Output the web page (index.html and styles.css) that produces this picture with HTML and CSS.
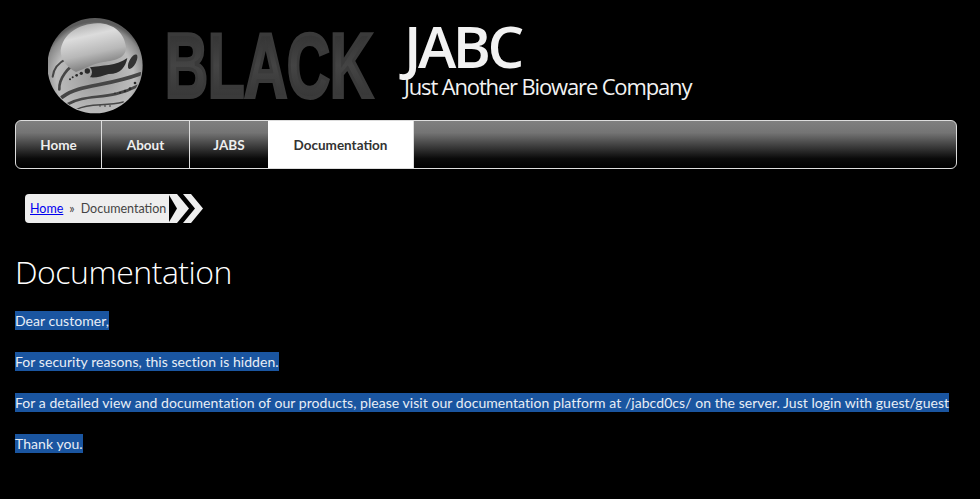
FILE: index.html
```html
<!DOCTYPE html>
<html lang="en">
<head>
    <meta charset="UTF-8">
    <title>JABC - Documentation</title>
    <link rel="stylesheet" href="styles.css">
</head>
<body>
    <header class="site-header">
        <svg class="logo" width="340" height="100" viewBox="0 0 340 100" aria-hidden="true">
            <defs>
                <radialGradient id="ball" cx="50%" cy="62%" r="58%">
                    <stop offset="0" stop-color="#9a9a9a"/>
                    <stop offset="0.7" stop-color="#bcbcbc"/>
                    <stop offset="0.92" stop-color="#8a8a8a"/>
                    <stop offset="1" stop-color="#5c5c5c"/>
                </radialGradient>
                <linearGradient id="shine" x1="0" y1="0" x2="0.3" y2="1">
                    <stop offset="0" stop-color="#a0a0a0"/>
                    <stop offset="0.35" stop-color="#dcdcdc"/>
                    <stop offset="0.7" stop-color="#b8b8b8"/>
                    <stop offset="1" stop-color="#7c7c7c"/>
                </linearGradient>
                <linearGradient id="word" x1="0" y1="0" x2="0" y2="1">
                    <stop offset="0" stop-color="#2c2c2c"/>
                    <stop offset="0.5" stop-color="#444"/>
                    <stop offset="1" stop-color="#303030"/>
                </linearGradient>
                <clipPath id="ball-clip"><circle cx="165" cy="167" r="140"/></clipPath>
            </defs>
            <g transform="translate(-8 -8) scale(0.3333)">
                <circle cx="165" cy="167" r="143" fill="url(#ball)"/>
                <g clip-path="url(#ball-clip)" fill="none" stroke="#464646" stroke-linecap="round">
                    <path d="M38 200C40 180 52 160 80 146" stroke-width="6"/>
                    <path d="M58 238C56 208 80 172 122 150" stroke-width="8"/>
                    <path d="M66 262C120 222 190 232 300 192" stroke-width="11"/>
                    <path d="M84 282C140 250 210 272 292 228" stroke-width="8"/>
                    <path d="M110 298C150 278 195 290 250 276" stroke-width="4"/>
                </g>
                <path d="M62 122C68 72 116 42 172 40C224 40 254 72 258 112C258 144 228 152 190 156C160 160 132 178 108 186C82 172 62 148 62 122Z" fill="url(#shine)"/>
                <path d="M150 172C182 166 232 168 262 144C256 170 244 192 206 192C186 198 170 204 150 202C158 192 158 182 150 172Z" fill="#2a2a2a"/>
                <ellipse cx="278" cy="155" rx="10" ry="24" transform="rotate(28 278 155)" fill="#333"/>
                <g fill="#2a2a2a">
                    <circle cx="142" cy="183" r="8"/>
                    <circle cx="124" cy="190" r="5"/>
                    <circle cx="110" cy="196" r="4"/>
                    <circle cx="98" cy="202" r="3"/>
                    <circle cx="90" cy="208" r="3"/>
                    <circle cx="225" cy="250" r="2.5"/>
                    <circle cx="240" cy="248" r="3"/>
                    <circle cx="255" cy="243" r="3.5"/>
                    <circle cx="270" cy="236" r="4"/>
                    <circle cx="285" cy="219" r="4"/>
                    <circle cx="180" cy="288" r="2"/>
                    <circle cx="195" cy="288" r="2.5"/>
                    <circle cx="210" cy="288" r="2.5"/>
                </g>
            </g>
            <text class="logo-word" transform="translate(117 79) scale(0.66 1)">BLACK</text>
        </svg>
        <div class="brand">
            <h1 class="brand-name">JABC</h1>
            <p class="brand-tag">Just Another Bioware Company</p>
        </div>
    </header>

    <nav class="main-nav">
        <a class="tab tab-home" href="#">Home</a>
        <a class="tab tab-about" href="#">About</a>
        <a class="tab tab-jabs" href="#">JABS</a>
        <a class="tab tab-docs active" href="#">Documentation</a>
    </nav>

    <div class="crumbs">
        <div class="crumb-box"><a href="#">Home</a><span class="crumb-sep">»</span><span>Documentation</span></div>
        <svg class="crumb-arrows" width="34" height="29" viewBox="0 0 34 29" aria-hidden="true">
            <path d="M0 0H8L20 14.5L8 29H0Z" fill="#eee"/>
            <path d="M0 1L8 14.5L0 28Z" fill="#000"/>
            <path d="M14 0H22L34 14.5L22 29H14L26 14.5Z" fill="#eee"/>
        </svg>
    </div>

    <main class="content">
        <h2 class="page-title">Documentation</h2>
        <p><span class="sel">Dear customer,</span></p>
        <p><span class="sel">For security reasons, this section is hidden.</span></p>
        <p><span class="sel">For a detailed view and documentation of our products, please visit our documentation platform at /jabcd0cs/ on the server. Just login with guest/guest</span></p>
        <p><span class="sel">Thank you.</span></p>
    </main>
</body>
</html>
```

FILE: styles.css
```css
body {
    margin: 0;
    background: #000;
    color: #eee;
    font-family: Lato, sans-serif;
    font-size: 14px;
}
.site-header {
    display: flex;
    height: 120px;
    padding-left: 48px;
}
.logo {
    flex: none;
    margin-top: 18px;
}
.logo-word {
    font-family: "Liberation Sans", sans-serif;
    font-weight: bold;
    font-size: 90px;
    fill: url(#word);
    stroke: #3a3a3a;
    stroke-width: 4;
}
.brand {
    margin-left: 16px;
    padding-top: 18px;
    font-family: "Open Sans", sans-serif;
    color: #f2f2f2;
}
.brand-name {
    margin: 0;
    font-size: 58px;
    font-weight: 600;
    line-height: 56px;
    letter-spacing: -3.5px;
}
.brand-tag {
    margin: 0;
    font-size: 22px;
    font-weight: 400;
    line-height: 24px;
    letter-spacing: -1.15px;
}
.main-nav {
    display: flex;
    box-sizing: border-box;
    height: 49px;
    margin: 0 23px 0 15px;
    border: 1px solid #ddd;
    border-radius: 6px;
    background: linear-gradient(to bottom, #808080 0%, #747474 25%, #0a0a0a 80%, #000 100%);
    overflow: hidden;
}
.tab {
    display: flex;
    align-items: center;
    justify-content: center;
    box-sizing: border-box;
    border-right: 1px solid #ddd;
    color: #eee;
    font-size: 13.5px;
    font-weight: bold;
    text-decoration: none;
}
.tab-home { width: 86px; }
.tab-about { width: 88px; }
.tab-jabs { width: 78px; border-right: 0; }
.tab-docs { width: 146px; }
.tab.active {
    background: #fff;
    color: #333;
}
.crumbs {
    display: flex;
    margin: 25px 0 0 25px;
}
.crumb-box {
    display: flex;
    align-items: center;
    width: 139px;
    height: 29px;
    padding-left: 5px;
    border-radius: 4px 0 0 4px;
    background: #eee;
    color: #444;
    font-size: 12.5px;
}
.crumb-box a {
    color: #00e;
}
.crumb-sep {
    margin: 0 6px;
}
.content {
    padding: 0 15px;
}
.page-title {
    margin: 27px 0 0;
    font-family: "Open Sans", sans-serif;
    font-size: 32px;
    font-weight: 300;
    line-height: 44px;
    letter-spacing: -0.5px;
    color: #fff;
}
.content p {
    margin: 0 0 22px;
    line-height: 19px;
    letter-spacing: 0.05px;
    white-space: nowrap;
}
.page-title + p {
    margin-top: 17px;
}
.sel {
    display: inline-block;
    background: #1a55a0;
    color: #e8eef6;
}
```
